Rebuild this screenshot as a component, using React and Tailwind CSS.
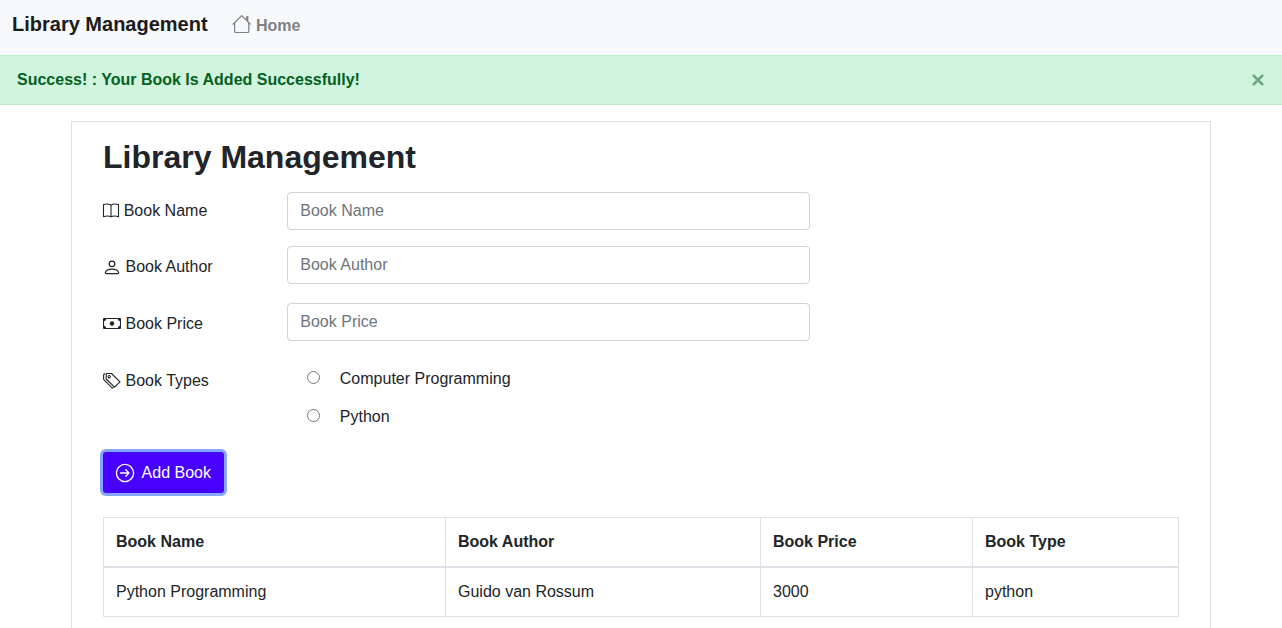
import React from "react";

function HouseIcon() {
  return (
    <svg width="20" height="20" viewBox="0 0 20 20" fill="none" stroke="currentColor" strokeWidth="1.2" strokeLinecap="round" strokeLinejoin="round">
      <path d="M1 10.200 9.700 1.600 18.400 10.200" />
      <path d="M2.600 8.800v8.700a1 1 0 0 0 1 1h12.200a1 1 0 0 0 1-1V8.800" />
      <path d="M14 2.200h2.400v5.400L14 5.200Z" fill="currentColor" stroke="none" />
    </svg>
  );
}

function BookIcon() {
  return (
    <svg width="18" height="18" viewBox="0 0 18 18" fill="none" stroke="currentColor" strokeWidth="1.1" strokeLinejoin="round">
      <path d="M9 3C7 1.900 3.400 1.900 1.500 2.600V14.700c2.200-.8 5.600-.8 7.500 0 1.900-.8 5.300-.8 7.500 0V2.600C14.600 1.900 11 1.900 9 3Z" />
      <path d="M9 3v11.700" />
    </svg>
  );
}

function PersonIcon() {
  return (
    <svg width="18" height="18" viewBox="0 0 18 18" fill="none" stroke="currentColor" strokeWidth="1.25" strokeLinejoin="round">
      <circle cx="9" cy="5.800" r="2.800" />
      <path d="M3.200 15.500h11.600c.6 0 .9-.5.8-1-.4-1.900-2.700-3.300-6.600-3.300s-6.200 1.400-6.600 3.300c-.1.500.2 1 .8 1Z" />
    </svg>
  );
}

function CashIcon() {
  return (
    <svg width="18" height="18" viewBox="0 0 18 18" fill="currentColor">
      <path fillRule="evenodd" d="M1 3h16a1 1 0 0 1 1 1v9a1 1 0 0 1-1 1H1a1 1 0 0 1-1-1V4a1 1 0 0 1 1-1Zm2.200 1.100A2 2 0 0 1 1.100 6v5a2 2 0 0 1 2.100 1.900h11.600a2 2 0 0 1 2.100-1.900V6a2 2 0 0 1-2.100-1.900Z" />
      <circle cx="9" cy="8.500" r="2.200" />
    </svg>
  );
}

function TagsIcon() {
  return (
    <svg width="18" height="18" viewBox="0 0 18 18" fill="none" stroke="currentColor" strokeWidth="1.1" strokeLinejoin="round" strokeLinecap="round">
      <path d="M3.200 2.200a.7.7 0 0 1 .7-.7h4.600l8.500 8.300-5.500 5.400-8.300-8.200Z" />
      <path d="M1.900 1.900c-.8 0-1.300.5-1.300 1.200v4.300l8.700 8.700.7-.6" />
      <circle cx="6.200" cy="4.700" r="1.200" />
    </svg>
  );
}

function ArrowCircleIcon() {
  return (
    <svg width="20" height="20" viewBox="0 0 20 20" fill="none" stroke="currentColor" strokeWidth="1.350" strokeLinecap="round" strokeLinejoin="round">
      <circle cx="10" cy="10" r="8.600" />
      <path d="M5.500 10h8.500M10.800 6.800 14 10l-3.200 3.200" />
    </svg>
  );
}

const inputClass =
  "block h-[38px] w-[523px] rounded border border-[#ced4da] bg-white pr-3 pl-[12.3px] text-base text-[#495057] placeholder:text-[#6c757d] outline-none";

const books = [["Python Programming", "Guido van Rossum", "3000", "python"]];

export default function App() {
  return (
    <div className="h-[628px] overflow-hidden bg-white font-['Liberation_Sans',Arial,sans-serif] text-base leading-6 text-[#212529]">
      <nav className="flex h-[55px] items-start bg-[#f8f9fb] pl-3">
        <a className="mt-[9px] text-xl leading-[30px] font-bold text-[#1b1b1e]">Library Management</a>
        <a className="mt-[14px] ml-6 flex gap-[4.3px] font-bold text-[#808084]">
          <HouseIcon />
          Home
        </a>
      </nav>

      <div className="flex h-[50px] items-center justify-between border-y border-[#bdebca] bg-[#d0f4dd] px-[17px] font-bold text-[#04611f]">
        <span>Success! : Your Book Is Added Successfully!</span>
        <button aria-label="Close" className="text-[#6daa83]">
          <svg width="14" height="14" viewBox="0 0 14 14" stroke="currentColor" strokeWidth="2.600">
            <path d="m2 2 10 10M12 2 2 12" />
          </svg>
        </button>
      </div>

      <main className="mx-auto mt-4 h-[600px] w-[1140px] border border-[#dee2e6] px-[31px] pt-4">
        <h1 className="text-[32px] leading-[38px] font-bold">Library Management</h1>

        <form className="flex flex-col">
          <div className="mt-4 flex">
            <label className="flex w-[184px] gap-[3.7px] pt-[7px]">
              <span className="-ml-px pt-[3px]"><BookIcon /></span>
              Book Name
            </label>
            <input className={inputClass} placeholder="Book Name" />
          </div>
          <div className="mt-4 flex">
            <label className="flex w-[184px] gap-[4.500px] pt-[9px]">
              <span className="pt-[3px]"><PersonIcon /></span>
              Book Author
            </label>
            <input className={inputClass} placeholder="Book Author" />
          </div>
          <div className="mt-[19px] flex">
            <label className="flex w-[184px] gap-[4.500px] pt-[9px]">
              <span className="pt-[3px]"><CashIcon /></span>
              Book Price
            </label>
            <input className={inputClass} placeholder="Book Price" />
          </div>
          <div className="mt-[26px] flex">
            <span className="flex w-[184px] gap-[4.500px] pt-[2px]">
              <span className="pt-[3px]"><TagsIcon /></span>
              Book Types
            </span>
            <div className="flex flex-col gap-[14px] pl-5">
              <label className="flex gap-[19.8px]">
                <input type="radio" name="type" className="mt-[4px] h-[13px] w-[13px]" />
                Computer Programming
              </label>
              <label className="flex gap-[19.8px]">
                <input type="radio" name="type" className="mt-[4px] h-[13px] w-[13px]" />
                Python
              </label>
            </div>
          </div>
          <button
            type="button"
            className="mt-[23px] flex h-[41px] w-[121px] items-center gap-[6.6px] rounded-[3px] bg-[#4800ff] pl-3 whitespace-nowrap text-white shadow-[0_0_0_3px_#85a5ff]"
          >
            <span className="pt-px"><ArrowCircleIcon /></span>
            Add Book
          </button>
        </form>

        <table className="mt-6 w-[1075px] table-fixed border-collapse border border-[#dee2e6] text-left">
          <colgroup>
            <col className="w-[342px]" />
            <col className="w-[315px]" />
            <col className="w-[212px]" />
            <col className="w-[206px]" />
          </colgroup>
          <thead>
            <tr>
              {["Book Name", "Book Author", "Book Price", "Book Type"].map((title) => (
                <th key={title} className="border border-b-2 border-[#dee2e6] p-3 font-bold">{title}</th>
              ))}
            </tr>
          </thead>
          <tbody>
            {books.map((book) => (
              <tr key={book[0]}>
                {book.map((value) => (
                  <td key={value} className="border border-[#dee2e6] p-3">{value}</td>
                ))}
              </tr>
            ))}
          </tbody>
        </table>
      </main>
    </div>
  );
}
